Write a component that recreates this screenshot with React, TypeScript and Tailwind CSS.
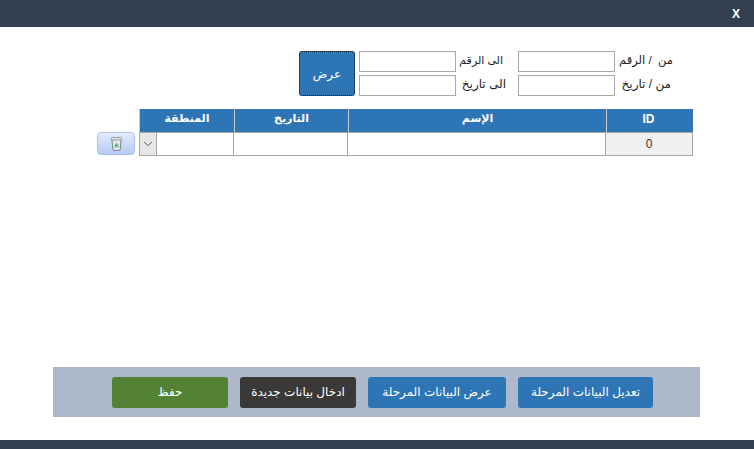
import { ChevronDown } from "lucide-react";

const arabic = "font-['Liberation_Sans','DejaVu_Sans',sans-serif]";

function TrashIcon() {
  return (
    <svg width="11" height="14" viewBox="0 0 12 15">
      <path d="M1 2.5 L2 13.5 Q2.1 14.5 3 14.5 L9 14.5 Q9.9 14.5 10 13.5 L11 2.5 Z" fill="#e8e8e6" stroke="#777" strokeWidth="1" />
      <rect x="0.5" y="0.5" width="11" height="2.5" rx="1" fill="#f5f5f5" stroke="#888" strokeWidth="1" />
      <path d="M3.5 10 L6 6 L8.5 10 Z" fill="#3fb28a" />
      <rect x="3.5" y="10" width="5" height="1.5" fill="#7fcdb0" />
    </svg>
  );
}

function FilterInput() {
  return <input className="block h-[21px] w-[97px] border border-[#a9a9a9] bg-white" />;
}

function FilterLabel({ text, className }: { text: string; className: string }) {
  return (
    <div dir="rtl" className={`h-[21px] whitespace-pre text-right leading-[19px] text-[#222] ${className}`}>
      {text}
    </div>
  );
}

function HeadCell({ text, width, className = "" }: { text: string; width: string; className?: string }) {
  return (
    <div className={`${width} flex h-[23px] items-start justify-center border-l border-[#c9c9c9] pt-[1px] font-bold text-white ${className}`}>
      <span dir="rtl">{text}</span>
    </div>
  );
}

function ActionButton({ text, className }: { text: string; className: string }) {
  return (
    <button dir="rtl" className={`h-[31px] rounded-[3px] pb-[2px] text-xs text-white ${className}`}>
      {text}
    </button>
  );
}

export default function App() {
  return (
    <div className={`flex h-[449px] w-[754px] flex-col overflow-hidden bg-white ${arabic}`}>
      <div className="flex h-[27px] shrink-0 items-center justify-end bg-[#333f50] pr-[14px]">
        <span className="text-xs font-bold text-white">X</span>
      </div>

      <div className="flex-1">
        <div className="flex gap-[4px] pl-[299px] pt-[24px]">
          <button className="h-[45px] w-[56px] rounded-[3px] border border-dotted border-[#111] bg-[#2e75b6] text-xs text-white">
            <span dir="rtl">عرض</span>
          </button>
          <div className="grid grid-cols-[97px_62px_97px_60px] gap-y-[3px]">
            <FilterInput />
            <FilterLabel text="الى الرقم" className="pr-[15px] text-[11px]" />
            <FilterInput />
            <FilterLabel text="من  / الرقم" className="pr-[2px] text-[11.5px]" />
            <FilterInput />
            <FilterLabel text="الى تاريخ" className="pr-[12px] text-xs" />
            <FilterInput />
            <FilterLabel text="من / تاريخ" className="pr-[4px] text-xs" />
          </div>
        </div>

        <div className="flex items-end gap-[4px] pl-[97px] pt-[13px]">
          <button className="mb-[1px] flex h-[23px] w-[38px] items-center justify-center rounded-[4px] border border-[#a9c0ee] bg-gradient-to-b from-[#e3ebfc] to-[#b7caf5]">
            <TrashIcon />
          </button>
          <div className="w-[554px]">
            <div className="flex bg-[#2e75b6]">
              <HeadCell text="المنطقة" width="w-[95px]" className="text-[11px]" />
              <HeadCell text="التاريخ" width="w-[114px]" className="text-[11px]" />
              <HeadCell text="الإسم" width="w-[258px]" className="text-[11px]" />
              <HeadCell text="ID" width="w-[87px]" className="pr-[3px] pt-[2px] text-xs" />
            </div>
            <div className="flex h-[24px] border border-[#a6a6a6]">
              <div className="flex w-[94px] border-r border-[#a6a6a6]">
                <div className="flex w-[17px] items-center justify-center border-r border-[#a6a6a6] bg-[#e6e6e6]">
                  <ChevronDown size={14} strokeWidth={1.5} className="text-[#444]" />
                </div>
              </div>
              <div className="w-[114px] border-r border-[#a6a6a6]" />
              <div className="w-[258px] border-r border-[#a6a6a6]" />
              <div className="flex flex-1 items-center justify-center bg-[#f0f0f0] text-xs text-[#333]">0</div>
            </div>
          </div>
        </div>
      </div>

      <div className="ml-[53px] flex h-[50px] w-[647px] shrink-0 items-start gap-[12px] bg-[#adb9ca] pl-[59px] pt-[10px]">
        <ActionButton text="حفظ" className="w-[116px] bg-[#548235]" />
        <ActionButton text="ادخال بيانات جديدة" className="w-[116px] bg-[#3b3838]" />
        <ActionButton text="عرض البيانات المرحلة" className="w-[138px] bg-[#2e75b6]" />
        <ActionButton text="تعديل البيانات المرحلة" className="w-[135px] bg-[#2e75b6]" />
      </div>

      <div className="h-[23px] shrink-0" />
      <div className="h-[9px] shrink-0 bg-[#333f50]" />
    </div>
  );
}
